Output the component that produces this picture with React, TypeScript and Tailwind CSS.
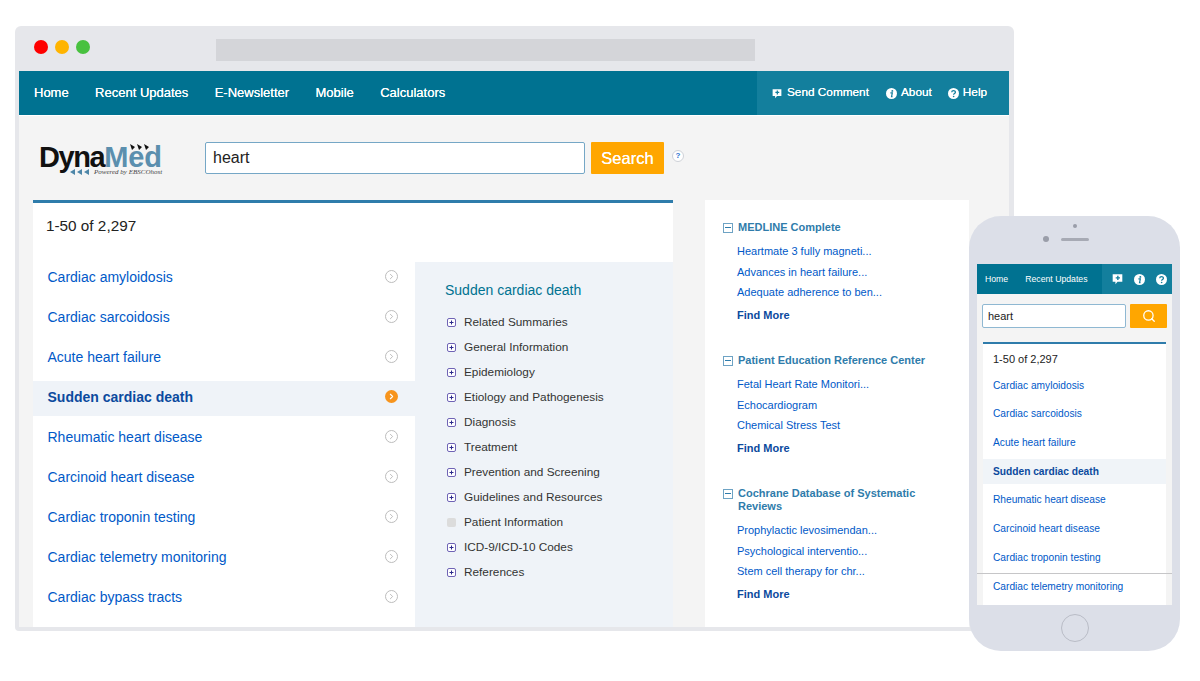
import React from 'react';
import { ChevronRight, Search } from 'lucide-react';

const results = [
  'Cardiac amyloidosis',
  'Cardiac sarcoidosis',
  'Acute heart failure',
  'Sudden cardiac death',
  'Rheumatic heart disease',
  'Carcinoid heart disease',
  'Cardiac troponin testing',
  'Cardiac telemetry monitoring',
  'Cardiac bypass tracts',
];

const sections = [
  'Related Summaries',
  'General Information',
  'Epidemiology',
  'Etiology and Pathogenesis',
  'Diagnosis',
  'Treatment',
  'Prevention and Screening',
  'Guidelines and Resources',
  'Patient Information',
  'ICD-9/ICD-10 Codes',
  'References',
];

const sources = [
  {
    title: 'MEDLINE Complete',
    links: ['Heartmate 3 fully magneti...', 'Advances in heart failure...', 'Adequate adherence to ben...'],
  },
  {
    title: 'Patient Education Reference Center',
    links: ['Fetal Heart Rate Monitori...', 'Echocardiogram', 'Chemical Stress Test'],
  },
  {
    title: 'Cochrane Database of Systematic Reviews',
    links: ['Prophylactic levosimendan...', 'Psychological interventio...', 'Stem cell therapy for chr...'],
  },
];

function InfoIcon({ className }: { className: string }) {
  return (
    <svg viewBox="0 0 16 16" className={className}>
      <circle cx="8" cy="8" r="8" fill="currentColor" />
      <circle cx="9.2" cy="4.2" r="1.4" fill="#137f9d" />
      <path d="M6.4 7.2h2.8l-1.1 5.2h1.4" stroke="#137f9d" strokeWidth="1.8" fill="none" />
    </svg>
  );
}

function HelpIcon({ className }: { className: string }) {
  return (
    <svg viewBox="0 0 16 16" className={className}>
      <circle cx="8" cy="8" r="8" fill="currentColor" />
      <path d="M5.4 6.2c0-3.2 5.4-3.2 5.4 0 0 1.9-2.6 1.8-2.6 3.6" stroke="#137f9d" strokeWidth="1.8" fill="none" />
      <circle cx="8.2" cy="12.3" r="1.2" fill="#137f9d" />
    </svg>
  );
}

function CommentIcon({ className }: { className: string }) {
  return (
    <svg viewBox="0 0 16 16" className={className}>
      <path d="M1 1h14v11H8l-3 3.5V12H1z" fill="currentColor" />
      <path d="M8.5 3.2v6.2M5.4 6.3h6.2" stroke="#137f9d" strokeWidth="2" />
    </svg>
  );
}

function PlusBox({ disabled }: { disabled?: boolean }) {
  if (disabled) {
    return <span className="w-[9px] h-[9px] rounded-[2px] bg-[#dcdcdc]" />;
  }
  return (
    <svg viewBox="0 0 9 9" className="w-[9px] h-[9px]">
      <rect x="0.5" y="0.5" width="8" height="8" rx="1.5" fill="#fff" stroke="#6f63b5" />
      <path d="M4.5 2.5v4M2.5 4.5h4" stroke="#2c2a8c" />
    </svg>
  );
}

function Logo() {
  return (
    <div className="relative w-[124px] h-[34px]">
      <div className="pt-[3px] pl-[1px] text-[29px] leading-[22px] font-bold tracking-[-1.4px] text-[#111]">
        Dyna<span className="inline-block leading-[22px] text-[#5b8fae] tracking-[-0.2px]">Med</span>
      </div>
      <div className="absolute left-[32px] top-[25px] flex items-center gap-[4px]">
        <svg viewBox="0 0 20 6" className="w-[20px] h-[6px]">
          <path d="M0 3l5-3v6zM7 3l5-3v6zM14 3l5-3v6z" fill="#4d86a8" />
        </svg>
        <span className="font-['Liberation_Serif',serif] italic text-[7px] leading-[8px] text-[#444] whitespace-nowrap">
          Powered by EBSCOhost
        </span>
      </div>
      <svg viewBox="0 0 20 6" className="absolute left-[92px] top-[1px] w-[20px] h-[6px]">
        <path d="M0 0l5 3-3 3zM7 0l5 3-3 3zM14 0l5 3-3 3z" fill="#111" />
      </svg>
    </div>
  );
}

function Phone() {
  return (
    <div className="absolute left-[969px] top-[216px] w-[211px] h-[435px] rounded-[32px] bg-[#dcdfe8] flex flex-col items-center">
      <span className="mt-[8px] w-[4px] h-[4px] rounded-full bg-[#9a9ea9]" />
      <div className="mt-[8px] h-[6px] flex items-center relative">
        <span className="absolute left-[-18px] w-[6px] h-[6px] rounded-full bg-[#9a9ea9]" />
        <span className="w-[28px] h-[3px] rounded-full bg-[#a7aab4]" />
      </div>
      <div className="mt-[22px] w-[195px] h-[341px] bg-[#f4f4f4] overflow-hidden flex flex-col relative">
        <div className="h-[30px] flex bg-[#007291] text-white shrink-0 text-[8.7px]">
          <div className="flex-1 flex items-center gap-[17px] pl-[8px] pt-[2px]">
            <span>Home</span>
            <span>Recent Updates</span>
          </div>
          <div className="w-[70px] bg-[#137f9d] flex items-center gap-[11px] pl-[10px]">
            <CommentIcon className="w-[11px] h-[12px]" />
            <InfoIcon className="w-[11px] h-[11px]" />
            <HelpIcon className="w-[11px] h-[11px]" />
          </div>
        </div>
        <div className="flex gap-[4px] px-[5px] mt-[10px] shrink-0">
          <div className="w-[144px] h-[24px] bg-white border border-[#8fb8d2] rounded-[2px] pl-[5px] flex items-center text-[11px] text-[#222]">
            heart
          </div>
          <div className="w-[37px] h-[24px] bg-[#ffa600] rounded-[1px] flex items-center justify-center">
            <Search className="w-[14px] h-[14px] text-white" strokeWidth={2.2} />
          </div>
        </div>
        <div className="mx-[6px] mt-[14px] flex-1 bg-white border-t-2 border-[#2f7cab]">
          <div className="pl-[10px] mt-[8px] mb-[5px] text-[11px] leading-[14px] text-[#222]">1-50 of 2,297</div>
          {results.slice(0, 8).map((name) => {
            const active = name === 'Sudden cardiac death';
            return (
              <div key={name} className="h-[28.7px] flex items-center">
                <div
                  className={`w-full h-[25px] pl-[10px] flex items-center text-[10.2px] ${
                    active ? 'bg-[#f0f4f8] font-bold text-[#0b4a9e]' : 'text-[#0059c8]'
                  }`}
                >
                  {name}
                </div>
              </div>
            );
          })}
        </div>
        <span className="absolute left-0 right-0 top-[309px] h-px bg-[#c6c6c8]" />
      </div>
      <span className="mt-[9px] w-[28px] h-[28px] rounded-full border border-[#b9bcc6]" />
    </div>
  );
}

export default function App() {
  return (
    <div className="relative w-[1200px] h-[681px] bg-white overflow-hidden font-['Liberation_Sans',sans-serif]">
      <div className="pt-[26px] pl-[15px]">
        <div className="w-[999px] h-[605px] bg-[#e6e7eb] rounded-t-[6px] rounded-b-[4px] flex flex-col">
          <div className="h-[45px] flex items-start shrink-0">
            <div className="flex gap-[7px] pl-[19px] pt-[14px]">
              <span className="w-[14px] h-[14px] rounded-full bg-[#fe0000]" />
              <span className="w-[14px] h-[14px] rounded-full bg-[#ffb400]" />
              <span className="w-[14px] h-[14px] rounded-full bg-[#48c13f]" />
            </div>
            <div className="ml-[126px] mt-[13px] w-[539px] h-[22px] bg-[#d4d5d9]" />
          </div>
          <div className="ml-[4px] mr-[5px] flex-1 flex flex-col min-h-0 mb-[4px] bg-[#f4f4f4]">
            <div className="h-[45px] flex text-white border-b border-[#fff] shrink-0">
              <div className="flex-1 bg-[#007291] flex items-center gap-[26.4px] pl-[15px] text-[13px] [text-shadow:0_0_0.5px_#fff]">
                <span>Home</span>
                <span>Recent Updates</span>
                <span>E-Newsletter</span>
                <span>Mobile</span>
                <span>Calculators</span>
              </div>
              <div className="w-[252px] bg-[#137f9d] flex items-center pl-[15px] text-[11.8px] [text-shadow:0_0_0.4px_#fff]">
                <CommentIcon className="w-[10px] h-[11px] mr-[5px]" />
                <span>Send Comment</span>
                <InfoIcon className="w-[11px] h-[11px] ml-[17px] mr-[4px]" />
                <span>About</span>
                <HelpIcon className="w-[11px] h-[11px] ml-[16px] mr-[4px]" />
                <span>Help</span>
              </div>
            </div>
            <div className="h-[84px] flex items-start shrink-0">
              <div className="ml-[19px] mt-[27px]">
                <Logo />
              </div>
              <div className="ml-[43px] mt-[26px] w-[380px] h-[32px] bg-white border border-[#75a7c6] rounded-[2px] pl-[7px] flex items-center text-[16px] text-[#222]">
                heart
              </div>
              <div className="ml-[6px] mt-[26px] w-[73px] h-[32px] bg-[#ffa600] rounded-[1px] flex items-center justify-center text-white text-[16.5px] [text-shadow:0_0_0.5px_#fff]">
                Search
              </div>
              <span className="ml-[8px] mt-[34px] w-[12px] h-[12px] rounded-full bg-white border border-[#cfd2d8] flex items-center justify-center text-[8px] font-bold text-[#2f6fd0]">
                ?
              </span>
            </div>
            <div className="flex flex-1 min-h-0 pl-[14px]">
              <div className="w-[640px] bg-white border-t-[3px] border-[#2f7cab] flex">
                <div className="w-[382px] shrink-0">
                  <div className="h-[58px] pl-[13px] pt-[14px] text-[15.3px] leading-[18px] text-[#222]">1-50 of 2,297</div>
                  {results.map((name) => {
                    const active = name === 'Sudden cardiac death';
                    return (
                      <div
                        key={name}
                        className={`h-[35px] mb-[5px] pl-[14.5px] pr-[17px] pb-[3px] flex items-center justify-between text-[14px] ${
                          active ? 'bg-[#eff3f8] font-bold text-[#0b4a9e]' : 'text-[#0059c8]'
                        }`}
                      >
                        <span>{name}</span>
                        <span
                          className={`w-[13px] h-[13px] -mt-[2px] rounded-full flex items-center justify-center ${
                            active ? 'bg-[#f7941d] text-white' : 'border border-[#bdbdbd] text-[#a8a8a8]'
                          }`}
                        >
                          <ChevronRight className="w-[9px] h-[9px]" strokeWidth={active ? 3 : 2} />
                        </span>
                      </div>
                    );
                  })}
                </div>
                <div className="flex-1 mt-[59px] bg-[#eff3f8] pl-[30px] pt-[20px]">
                  <div className="text-[14px] leading-[17px] text-[#007291] mb-[11px]">Sudden cardiac death</div>
                  <ul className="pl-px">
                    {sections.map((s) => (
                      <li key={s} className="h-[25px] flex items-center gap-[7px] text-[11.8px] text-[#333]">
                        <span className="w-[11px] flex justify-center">
                          <PlusBox disabled={s === 'Patient Information'} />
                        </span>
                        {s}
                      </li>
                    ))}
                  </ul>
                </div>
              </div>
              <div className="ml-[32px] w-[264px] bg-white pl-[18px] pt-[21px]">
                {sources.map((src) => (
                  <div key={src.title} className="mb-[28.5px]">
                    <div className="flex items-start gap-[5px] text-[11px] leading-[13px] font-bold text-[#2f7cab]">
                      <span className="w-[10px] h-[10px] mt-[1.5px] shrink-0 border border-[#6ea3c4] flex items-center justify-center">
                        <span className="w-[6px] h-px bg-[#2f7cab]" />
                      </span>
                      <span className="w-[190px]">{src.title}</span>
                    </div>
                    <div className="pl-[14px] mt-[7px]">
                      {src.links.map((l) => (
                        <div key={l} className="h-[20.5px] flex items-center text-[11px] text-[#0059c8]">
                          {l}
                        </div>
                      ))}
                      <div className="mt-[3px] h-[20px] flex items-center text-[11px] font-bold text-[#0b4a9e]">Find More</div>
                    </div>
                  </div>
                ))}
              </div>
            </div>
          </div>
        </div>
      </div>
      <Phone />
    </div>
  );
}
